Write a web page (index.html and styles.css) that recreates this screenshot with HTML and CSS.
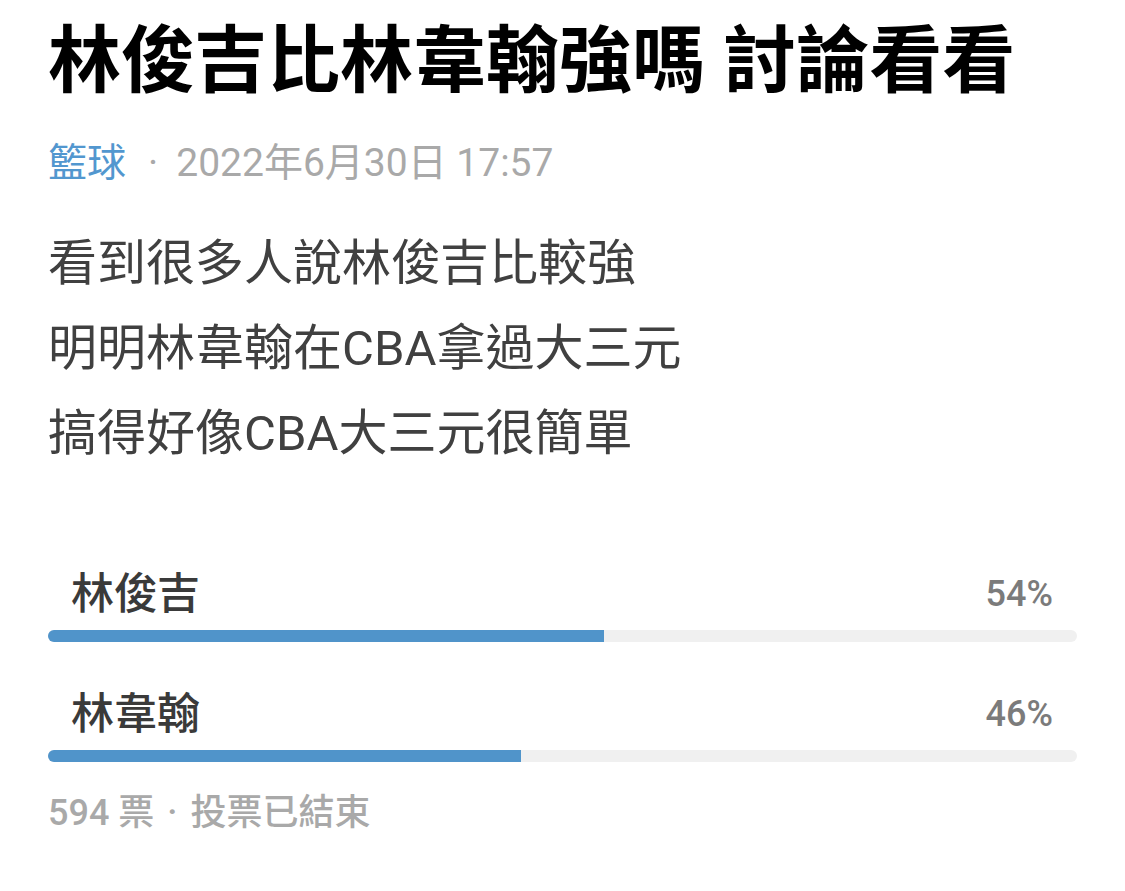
FILE: index.html
```html
<!DOCTYPE html>
<html lang="zh-Hant">
<head>
<meta charset="utf-8">
<title>林俊吉比林韋翰強嗎 討論看看</title>
<link rel="stylesheet" href="styles.css">
</head>
<body>
<main class="post">
  <h1 class="title">林俊吉比林韋翰強嗎 討論看看</h1>
  <div class="meta"><span class="board">籃球</span><span class="dot">·</span><span class="date">2022年6月30日 17:57</span></div>
  <div class="content">
    <p class="line">看到很多人說林俊吉比較強</p>
    <p class="line">明明林韋翰在CBA拿過大三元</p>
    <p class="line">搞得好像CBA大三元很簡單</p>
  </div>
  <section class="poll">
    <div class="option">
      <div class="option-row"><span class="option-label">林俊吉</span><span class="option-pct">54%</span></div>
      <div class="track"><div class="fill" style="width:54%"></div></div>
    </div>
    <div class="option">
      <div class="option-row"><span class="option-label">林韋翰</span><span class="option-pct">46%</span></div>
      <div class="track"><div class="fill" style="width:46%"></div></div>
    </div>
    <div class="poll-foot"><span>594 票</span><span class="dot foot-dot">·</span><span>投票已結束</span></div>
  </section>
</main>
</body>
</html>
```
FILE: styles.css
```css
html, body {
  margin: 0;
  padding: 0;
  background: #ffffff;
}

body {
  font-family: Roboto, "Noto Sans CJK TC", "Noto Sans CJK SC", sans-serif;
}

.post {
  padding: 0 48px;
}

.title {
  margin: 18px 0 0;
  font-size: 73px;
  line-height: 86px;
  font-weight: 700;
  color: #000000;
  white-space: nowrap;
}

.meta {
  margin-top: 35px;
  font-size: 39px;
  line-height: 48px;
  color: #a9a9a9;
  white-space: nowrap;
}

.board {
  color: #5297cf;
}

.meta .dot {
  margin: 0 18px 0 22px;
}

.content {
  margin-top: 34px;
}

.line {
  margin: 0;
  font-size: 49px;
  line-height: 85px;
  color: #404040;
}

.poll {
  margin-top: 92px;
}

.option + .option {
  margin-top: 46px;
}

.option-row {
  display: flex;
  justify-content: space-between;
  align-items: center;
  height: 52px;
  padding: 0 24px 0 23px;
}

.option-label {
  font-size: 43px;
  line-height: 52px;
  font-weight: 500;
  color: #3a3a3a;
}

.option-pct {
  font-size: 36px;
  line-height: 52px;
  font-weight: 500;
  color: #7b7b7b;
}

.track {
  margin-top: 10px;
  height: 12px;
  border-radius: 6px;
  background: #f0f0f0;
  overflow: hidden;
}

.fill {
  height: 100%;
  background: #5094ca;
}

.poll-foot {
  margin-top: 29px;
  font-size: 36px;
  line-height: 44px;
  font-weight: 500;
  color: #a9a9a9;
  white-space: nowrap;
}

.foot-dot {
  margin: 0 13px 0 13px;
}
```
